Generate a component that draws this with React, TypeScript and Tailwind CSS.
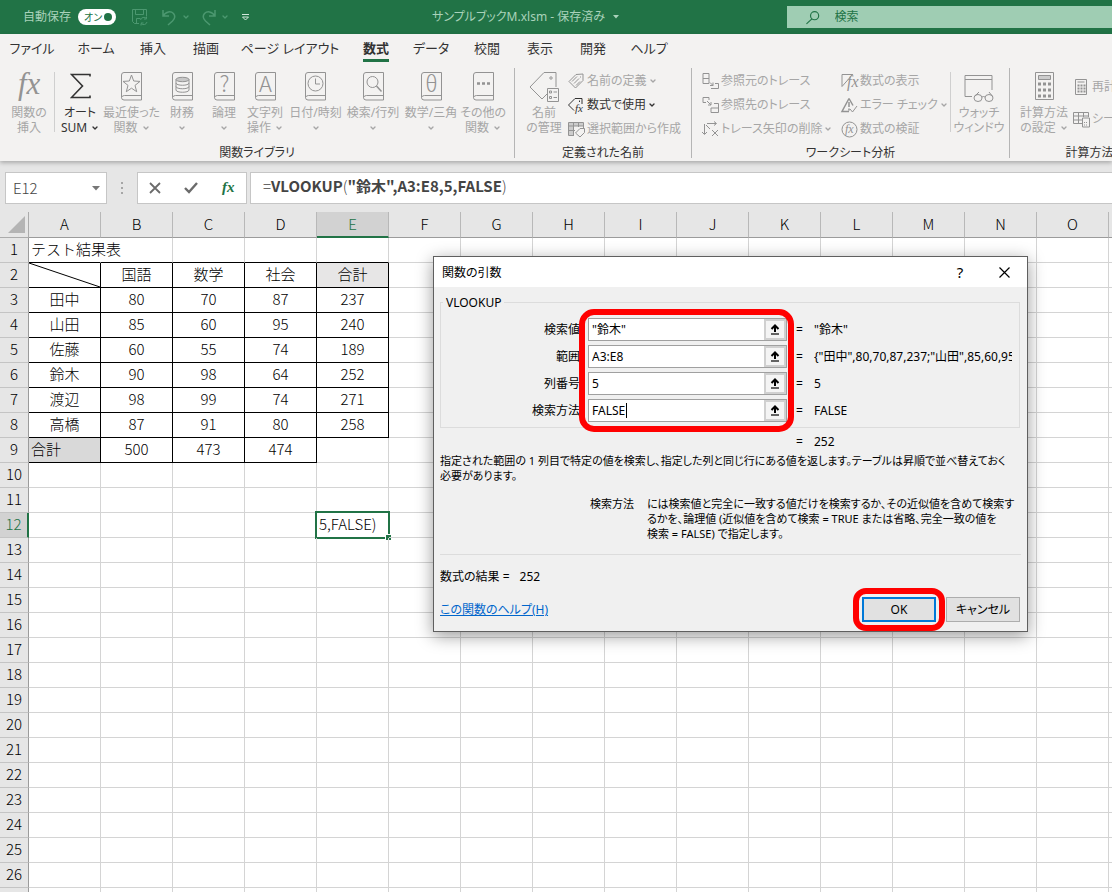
import React from 'react';
import { ChevronDown } from 'lucide-react';

interface Command {
  label: string[];
  icon: React.ReactNode;
  width: string;
  menu?: boolean;
  enabled?: boolean;
}

interface Argument {
  id: string;
  label: string;
  value: string;
  result: string;
  focused?: boolean;
}

const COLUMNS = ['A', 'B', 'C', 'D', 'E', 'F', 'G', 'H', 'I', 'J', 'K', 'L', 'M', 'N', 'O', 'P'];
const ROW_COUNT = 27;

const CELLS: Record<number, string[]> = {
  1: ['テスト結果表'],
  2: ['', '国語', '数学', '社会', '合計'],
  3: ['田中', '80', '70', '87', '237'],
  4: ['山田', '85', '60', '95', '240'],
  5: ['佐藤', '60', '55', '74', '189'],
  6: ['鈴木', '90', '98', '64', '252'],
  7: ['渡辺', '98', '99', '74', '271'],
  8: ['高橋', '87', '91', '80', '258'],
  9: ['合計', '500', '473', '474'],
  12: ['', '', '', '', '5,FALSE)'],
};

const TABS = [
  { label: 'ファイル', width: 'w-16' },
  { label: 'ホーム', width: 'w-16' },
  { label: '挿入', width: 'w-[50px]' },
  { label: '描画', width: 'w-14' },
  { label: 'ページ レイアウト', width: 'w-[112px]' },
  { label: '数式', width: 'w-[60px]' },
  { label: 'データ', width: 'w-[50px]' },
  { label: '校閲', width: 'w-[62px]' },
  { label: '表示', width: 'w-11' },
  { label: '開発', width: 'w-[62px]' },
  { label: 'ヘルプ', width: 'w-[50px]' },
];

const ARGUMENTS: Argument[] = [
  { id: 'lookup-value', label: '検索値', value: '"鈴木"', result: '"鈴木"' },
  { id: 'table-array', label: '範囲', value: 'A3:E8', result: '{"田中",80,70,87,237;"山田",85,60,95,240' },
  { id: 'col-index', label: '列番号', value: '5', result: '5' },
  { id: 'range-lookup', label: '検索方法', value: 'FALSE', result: 'FALSE', focused: true },
];

const Chevron = () => <ChevronDown className="w-2 h-2 shrink-0" strokeWidth={4} />;

const Book: React.FC<{ children: React.ReactNode }> = ({ children }) => (
  <svg width="21" height="29" viewBox="0 0 21 29" fill="none" stroke="currentColor" className="overflow-visible">
    <path d="M20.500 .5H3a2.500 2.500 0 0 0-2.500 2.500v22.500a2.500 2.500 0 0 0 2.500 2.500h17.500zM.5 25.500q.5-2 3-2h17" />
    {children}
  </svg>
);

const letter = (char: string) => (
  <text
    x="10.500"
    y="20"
    textAnchor="middle"
    fontSize="22"
    fontFamily="Noto Sans CJK JP, sans-serif"
    fontWeight="300"
    fill="currentColor"
    stroke="none"
  >
    {char}
  </text>
);

const fxText = (x: number, y: number, size: number) => (
  <text
    x={x}
    y={y}
    fontSize={size}
    fontFamily="Liberation Serif, serif"
    fontStyle="italic"
    fill="currentColor"
    stroke="none"
  >
    fx
  </text>
);

const LIBRARY: Command[] = [
  {
    label: ['オート', 'SUM'],
    width: 'w-[50px]',
    menu: true,
    enabled: true,
    icon: (
      <svg width="21" height="29" viewBox="0 0 21 29" fill="none" stroke="currentColor" strokeWidth="1.600">
        <path d="M20 4.500V2.500H1.500L12.500 14L1.500 25.500H20V23.500" />
      </svg>
    ),
  },
  {
    label: ['最近使った', '関数'],
    width: 'w-[53px]',
    menu: true,
    icon: (
      <Book>
        <path d="M10.500 3l2.200 6 6.300.4-5 4 1.700 6.300-5.200-3.500-5.200 3.500L7 13.400l-5-4 6.300-.4z" />
      </Book>
    ),
  },
  {
    label: ['財務'],
    width: 'w-12',
    menu: true,
    icon: (
      <Book>
        <ellipse cx="10.500" cy="7.500" rx="6.500" ry="2.200" fill="#c8c8c8" />
        <path d="M4 7.500v10.500c0 3 13 3 13 0V7.500M4 11c0 3 13 3 13 0M4 14.500c0 3 13 3 13 0" />
      </Book>
    ),
  },
  { label: ['論理'], width: 'w-9', menu: true, icon: <Book>{letter('?')}</Book> },
  { label: ['文字列', '操作'], width: 'w-[46px]', menu: true, icon: <Book>{letter('A')}</Book> },
  {
    label: ['日付/時刻'],
    width: 'w-[55px]',
    menu: true,
    icon: (
      <Book>
        <circle cx="10.500" cy="11.500" r="7.500" />
        <path d="M10.500 6.500v5.500h4.500" />
      </Book>
    ),
  },
  {
    label: ['検索/行列'],
    width: 'w-[60px]',
    menu: true,
    icon: (
      <Book>
        <circle cx="9.500" cy="10" r="5.500" />
        <path d="M13.500 14l5 5.500" strokeWidth="1.500" />
      </Book>
    ),
  },
  { label: ['数学/三角'], width: 'w-14', menu: true, icon: <Book>{letter('θ')}</Book> },
  {
    label: ['その他の', '関数'],
    width: 'w-12',
    menu: true,
    icon: (
      <Book>
        <path d="M4 11.500h13" strokeWidth="2.500" strokeDasharray="3 2" />
      </Book>
    ),
  },
];

const LargeButton: React.FC<Command> = ({ label, icon, width, menu, enabled }) => (
  <button
    className={`${width} flex flex-col items-center shrink-0 whitespace-nowrap text-[12px] leading-[15px] ${
      enabled ? 'text-[#333333]' : 'text-[#a6a6a6]'
    }`}
  >
    <span className={`h-[33px] flex items-start justify-center ${enabled ? '' : 'text-[#939393]'}`}>{icon}</span>
    <span>{label[0]}</span>
    <span className="h-[15px] flex items-center gap-1">
      {label[1]}
      {menu && <Chevron />}
    </span>
  </button>
);

const SmallButton: React.FC<{
  icon: React.ReactNode;
  label: string;
  menu?: boolean;
  enabled?: boolean;
}> = ({ icon, label, menu, enabled }) => (
  <button
    className={`h-6 flex items-center gap-[2px] whitespace-nowrap text-[12px] ${
      enabled ? 'text-[#333333]' : 'text-[#a6a6a6]'
    }`}
  >
    <svg
      width="17"
      height="17"
      viewBox="0 0 17 17"
      fill="none"
      stroke="currentColor"
      className={`shrink-0 overflow-visible ${enabled ? '' : 'text-[#939393]'}`}
    >
      {icon}
    </svg>
    <span>{label}</span>
    {menu && <Chevron />}
  </button>
);

const Group: React.FC<{ title: string; width: string; children: React.ReactNode }> = ({ title, width, children }) => (
  <div className={`${width} shrink-0 h-[90px] flex flex-col border-r border-[#b5b5b5]`}>
    <div className="h-[77px] shrink-0 flex pt-1">{children}</div>
    <div className="shrink-0 text-center text-[12px] leading-4 text-[#333333]">{title}</div>
  </div>
);

const TitleBar = () => (
  <header className="h-[34px] shrink-0 grid grid-cols-[432px_355px_1fr] items-center bg-[#217346] text-[12px] text-[#a9d2ba]">
    <div className="flex items-center pl-[23px]">
      <span id="autosave">自動保存</span>
      <button
        role="switch"
        aria-checked="true"
        aria-labelledby="autosave"
        className="ml-[7px] w-[38px] h-4 flex items-center justify-between rounded-full bg-white pl-[6px] pr-1 text-[10px] text-[#217346]"
      >
        オン
        <span className="w-2 h-2 rounded-full bg-[#217346]" />
      </button>
      <div className="flex items-center pl-4 text-[#4c9870]">
        <button aria-label="保存">
          <svg width="17" height="17" viewBox="0 0 17 17" fill="none" stroke="currentColor">
            <path d="M7 14.500H2.500l-2-2V.5h14V7M3.500.5v5h8v-5M4.500 14.500V9.500h4M8.500 11a3.500 3.500 0 0 1 6-1.500V7.500m0 2.500h-2.500M15 13a3.500 3.500 0 0 1-6 1.500v2m0-2.500h2.500" />
          </svg>
        </button>
        <button aria-label="元に戻す" className="ml-3 flex items-center gap-1">
          <svg width="17" height="17" viewBox="0 0 17 17" fill="none" stroke="currentColor" strokeWidth="1.500">
            <path d="M2 1v6h6M2 7c3-5 8-5 10.500-2.500 2.500 3 1 5.500-1 7.500L7 16" />
          </svg>
          <Chevron />
        </button>
        <button aria-label="やり直し" className="ml-[10px] flex items-center gap-1">
          <svg width="17" height="17" viewBox="0 0 17 17" fill="none" stroke="currentColor" strokeWidth="1.500">
            <path d="M15 1v6H9M15 7c-3-5-8-5-10.500-2.500-2.500 3-1 5.500 1 7.500L10 16" />
          </svg>
          <Chevron />
        </button>
        <button aria-label="クイック アクセス ツール バーのユーザー設定" className="ml-3 text-[#d3e8dc]">
          <svg width="9" height="8" viewBox="0 0 9 8" fill="none" stroke="currentColor">
            <path d="M1 1.500h7M1.500 4h6l-3 3z" />
          </svg>
        </button>
      </div>
    </div>
    <button className="flex items-center gap-2 whitespace-nowrap text-[12px]">
      サンプルブックM.xlsm - 保存済み
      <svg width="6" height="4" viewBox="0 0 6 4" fill="currentColor">
        <path d="M0 0h6L3 3.500z" />
      </svg>
    </button>
    <label className="h-[22px] flex items-center bg-[#9fcdb3] pl-[19px] text-[#217346]">
      <svg width="15" height="15" viewBox="0 0 15 15" fill="none" stroke="currentColor" strokeWidth="1.300">
        <circle cx="9.500" cy="5.500" r="4.500" />
        <path d="M6.500 9L.5 14.500" />
      </svg>
      <input
        type="search"
        aria-label="検索"
        placeholder="検索"
        className="ml-[15px] w-full min-w-0 bg-transparent text-[12px] placeholder:text-[#217346] placeholder:opacity-100 outline-none"
      />
    </label>
  </header>
);

const Ribbon = () => (
  <div className="shrink-0 h-[127px] bg-[#f3f2f1] shadow-[0_2px_4px_rgba(0,0,0,0.25)] relative overflow-hidden">
    <nav className="flex h-[34px] text-[13px] text-[#333333]">
      {TABS.map(({ label, width }) => (
        <button key={label} className={`${width} shrink-0 flex justify-center whitespace-nowrap`}>
          <span
            className={`h-7 flex items-center pt-[5px] border-b-[3px] ${
              label === '数式' ? 'border-[#217346] font-bold' : 'border-transparent'
            }`}
          >
            {label}
          </span>
        </button>
      ))}
    </nav>
    <div className="flex">
      <Group title="関数ライブラリ" width="w-[515px]">
        <span className="w-1 shrink-0" />
        <LargeButton
          label={['関数の', '挿入']}
          width="w-[50px]"
          icon={
            <svg width="26" height="29" viewBox="0 0 26 29" className="overflow-visible">
              {fxText(2, 22, 31)}
            </svg>
          }
        />
        <span className="w-px h-[60px] bg-[#cfcfcf] shrink-0" />
        {LIBRARY.map((command) => (
          <LargeButton key={command.label.join('')} {...command} />
        ))}
      </Group>

      <Group title="定義された名前" width="w-[177px]">
        <span className="w-[9px] shrink-0" />
        <LargeButton
          label={['名前', 'の管理']}
          width="w-10"
          icon={
            <svg width="30" height="31" viewBox="0 0 30 31" fill="none" stroke="currentColor">
              <path d="M18.500 16.500h11v13h-11zM27 15V.5H15L1 15l12 12 5-5" />
              <circle cx="22" cy="6" r="1.200" />
              <path d="M20.500 19h2v2h-2zM20.500 24.500h2v2h-2zM24.500 20h3.500M24.500 25.500h3.500" />
            </svg>
          }
        />
        <div className="pl-1">
          <div className="h-[72px] -mt-[3px] flex flex-col">
            <SmallButton
              label="名前の定義"
              menu
              icon={<path d="M1 8.500L8 1.500l7-.5v6.500L7.500 15zM4 8.500l5-5M6 10.500l5-5M8 12.500l4-4M12.500 3.500v1" />}
            />
            <SmallButton
              label="数式で使用"
              menu
              enabled
              icon={
                <>
                  <path d="M6 13.500L.5 8 7 1.500h7V7M11.500 3.500v1.500" />
                  {fxText(7, 15, 11)}
                </>
              }
            />
            <SmallButton
              label="選択範囲から作成"
              icon={
                <>
                  <path d="M1 2h14v3H1zM1 5h4v9H1z" fill="#cccccc" stroke="none" />
                  <path d="M6 14.500H.5V1.500h15V7M.5 5h15M.5 9.500H7M5.500 1.500v13M10.500 1.500V6" />
                  <path d="M7.500 12L12 7.500h4.500v4L12 16z" />
                </>
              }
            />
          </div>
        </div>
      </Group>

      <Group title="ワークシート分析" width="w-[318px]">
        <div className="w-[149px] shrink-0 pl-[10px]">
          <div className="h-[72px] -mt-[3px] flex flex-col">
            <SmallButton
              label="参照元のトレース"
              icon={<path d="M1 .5h6v10H1zM1 5.500h6M8 9.500l3 3M11 9.500v3H8M9 15.500h7.500v-5H13" />}
            />
            <SmallButton
              label="参照先のトレース"
              icon={<path d="M4 5.500H1v-5h6V3M5 4l4 4M9 5v3H6M12 6.500h4.500v9h-7.500V11M9 11h7.500" />}
            />
            <SmallButton
              label="トレース矢印の削除"
              menu
              icon={<path d="M2.500 3v10M0 11l2.500 2.500L5 11M5 2.500h9M12 .5l2.500 2-2.500 2M4 4l4 4M10 9l6 6M16 9l-6 6" />}
            />
          </div>
        </div>
        <div className="w-[109px] shrink-0">
          <div className="h-[72px] -mt-[3px] flex flex-col">
            <SmallButton
              label="数式の表示"
              icon={
                <>
                  <path d="M11 1.500H1v12L12 1" />
                  {fxText(6, 14, 16)}
                </>
              }
            />
            <SmallButton
              label="エラー チェック"
              menu
              icon={
                <>
                  <path d="M8 1.500L1 14.500h7M8 1.500l4 7M8 5v5M8 11.500v2" strokeWidth="1.500" />
                  <path d="M9 12l2.500 3L16 9" />
                </>
              }
            />
            <SmallButton
              label="数式の検証"
              icon={
                <>
                  <circle cx="8.500" cy="8.500" r="7.500" />
                  {fxText(4, 12, 12)}
                </>
              }
            />
          </div>
        </div>
        <span className="w-px h-[60px] bg-[#cfcfcf] shrink-0" />
        <LargeButton
          label={['ウォッチ', 'ウィンドウ']}
          width="w-14"
          icon={
            <svg width="30" height="31" viewBox="0 0 30 31" fill="none" stroke="currentColor">
              <path d="M8 24.500H1V3.500h27V18M1 7.500h27" />
              <ellipse cx="14" cy="26" rx="4" ry="3.500" />
              <ellipse cx="25" cy="26" rx="4" ry="3.500" />
              <path d="M18 25q1.500-1 3 0M10 25l5-5M29 25l-4-5" />
            </svg>
          }
        />
      </Group>

      <Group title="計算方法" width="w-[160px]">
        <span className="w-[9px] shrink-0" />
        <LargeButton
          label={['計算方法', 'の設定']}
          width="w-[50px]"
          menu
          icon={
            <svg width="19" height="29" viewBox="0 0 19 29" fill="none" stroke="currentColor">
              <path d="M.5.500h18v27H.5z" />
              <path d="M3.500 3.500h12v4h-12z" fill="#cccccc" />
              <path d="M3 12h13M3 18h13M3 24h13" strokeWidth="3" strokeDasharray="3 2" />
            </svg>
          }
        />
        <div className="pl-1 pt-[3px] flex flex-col gap-2">
          <SmallButton
            label="再計算実行"
            icon={
              <>
                <path d="M2.500.5h11v15h-11zM4.500 3h7" />
                <path d="M4.500 6.500h8M4.500 9.500h8M4.500 12.500h8" strokeWidth="2" strokeDasharray="2 1" />
              </>
            }
          />
          <SmallButton
            label="シート再計算"
            icon={
              <>
                <path d="M9 12.500H.5v-11h15V6M.5 5h15M.5 9H9M5.500 1.500v11M10.500 1.500V6M9.500 7h7v9h-7z" />
                <path d="M11 11.500h4M11 14h4" strokeDasharray="1 1" />
              </>
            }
          />
        </div>
      </Group>
    </div>
  </div>
);

const FormulaBar = () => (
  <div className="shrink-0 flex h-[51px] pt-[11px] pb-2 pl-[5px] text-[#444444]">
    <div className="w-[102px] h-8 flex items-center border border-[#c6c6c6] bg-white">
      <input
        aria-label="名前ボックス"
        defaultValue="E12"
        className="w-[86px] pl-[7px] bg-transparent text-[15px] font-light outline-none"
      />
      <svg width="8" height="5" viewBox="0 0 8 5" fill="#777777">
        <path d="M0 0h8L4 4.500z" />
      </svg>
    </div>
    <div className="w-[30px] flex flex-col items-center justify-center gap-[3px]">
      <span className="w-[2px] h-[2px] bg-[#a6a6a6]" />
      <span className="w-[2px] h-[2px] bg-[#a6a6a6]" />
      <span className="w-[2px] h-[2px] bg-[#a6a6a6]" />
    </div>
    <div className="w-[110px] h-8 flex items-center justify-around border border-[#c6c6c6] bg-white text-[#6b6b6b]">
      <button aria-label="キャンセル">
        <svg width="12" height="12" viewBox="0 0 12 12" fill="none" stroke="currentColor" strokeWidth="1.800">
          <path d="M1 1l10 10M11 1L1 11" />
        </svg>
      </button>
      <button aria-label="入力">
        <svg width="14" height="12" viewBox="0 0 14 12" fill="none" stroke="currentColor" strokeWidth="2.400">
          <path d="M1 6l4 4 8-9" />
        </svg>
      </button>
      <button aria-label="関数の挿入" className="text-[#217346]">
        <svg width="14" height="16" viewBox="0 0 14 16" className="overflow-visible">
          <g fontWeight="bold">{fxText(1, 12, 15)}</g>
        </svg>
      </button>
    </div>
    <div
      role="textbox"
      aria-label="数式バー"
      tabIndex={0}
      className="ml-[3px] flex-1 h-8 flex items-center whitespace-nowrap border border-r-0 border-[#c6c6c6] bg-white pl-3 pb-[3px] text-[15px] font-light"
    >
      =<span className="font-bold">VLOOKUP</span>(<span className="font-bold">"鈴木",A3:E8,5,FALSE</span>)
    </div>
  </div>
);

function isTableCell(row: number, col: number) {
  if (row >= 2 && row <= 8) return col >= 0 && col < 5;
  return row === 9 && col >= 0 && col < 4;
}

function cellClass(row: number, col: number) {
  const classes = ['relative h-[25px] p-0 align-top border-r border-b whitespace-nowrap'];
  const inTable = isTableCell(row, col);
  classes.push(inTable || isTableCell(row + 1, col) ? 'border-b-black' : 'border-b-[#d4d4d4]');
  if (row === 1 && col === 0) classes.push('border-r-transparent');
  else classes.push(inTable ? 'border-r-black' : 'border-r-[#d4d4d4]');
  if ((col === 0 && (row === 1 || row === 9)) || row === 12) classes.push('pl-[2px] text-left');
  else classes.push('text-center');
  if (row === 2 && col === 4) classes.push('bg-[#e7e6e6]');
  if (row === 9 && col === 0) classes.push('bg-[#d9d9d9]');
  return classes.join(' ');
}

const Sheet = () => (
  <table className="w-[1181px] table-fixed border-separate border-spacing-0 bg-white text-[15px] leading-[22px] font-light text-black">
    <thead>
      <tr>
        <th className="w-[29px] h-[26px] p-0 border-r border-b border-[#ababab] bg-[#e6e6e6]">
          <svg width="17" height="17" viewBox="0 0 17 17" className="ml-2" fill="#b4b4b4">
            <path d="M17 0v17H0z" />
          </svg>
        </th>
        {COLUMNS.map((name) => (
          <th
            key={name}
            scope="col"
            className={`w-[72px] h-[26px] p-0 align-top border-r border-r-[#b8b8b8] font-light leading-6 ${
              name === 'E'
                ? 'border-b-2 border-b-[#217346] bg-[#d2d2d2] text-[#217346]'
                : 'border-b border-b-[#9b9b9b] bg-[#e6e6e6]'
            }`}
          >
            {name}
          </th>
        ))}
      </tr>
    </thead>
    <tbody>
      {Array.from({ length: ROW_COUNT }, (_, i) => i + 1).map((row) => (
        <tr key={row}>
          <th
            scope="row"
            className={`h-[25px] p-0 align-top border-b border-b-[#c4c4c4] font-light ${
              row === 12
                ? 'border-r-2 border-r-[#217346] bg-[#d2d2d2] text-[#217346]'
                : 'border-r border-r-[#9b9b9b] bg-[#e6e6e6]'
            }`}
          >
            {row}
          </th>
          {COLUMNS.map((name, col) => (
            <td key={name} className={cellClass(row, col)}>
              {CELLS[row]?.[col]}
              {row === 2 && col === 0 && (
                <svg className="block" width="71" height="24" viewBox="0 0 71 24" stroke="black">
                  <path d="M0 0l71 24" />
                </svg>
              )}
              {row === 12 && name === 'E' && (
                <span className="absolute -inset-[2px] border-2 border-[#217346] pointer-events-none">
                  <span className="absolute -right-[3px] -bottom-[3px] w-[6px] h-[6px] bg-white pl-px pt-px">
                    <span className="block w-[5px] h-[5px] bg-[#217346]" />
                  </span>
                </span>
              )}
            </td>
          ))}
        </tr>
      ))}
    </tbody>
  </table>
);

const ArgumentRow: React.FC<Argument> = ({ id, label, value, result, focused }) => (
  <div className="h-[27px] flex items-center">
    <label htmlFor={id} className="w-[139px] shrink-0 text-right">
      {label}
    </label>
    <span className="ml-2 w-[199px] h-[23px] shrink-0 flex border border-[#a0a0a0] bg-white">
      <span className="flex-1 min-w-0 flex items-center pb-px">
        <input
          id={id}
          defaultValue={value}
          size={4}
          className={`pl-[3px] bg-transparent outline-none ${focused ? 'w-[38px] border-r border-black' : 'w-full'}`}
        />
      </span>
      <button
        aria-label={`${label}の範囲を選択`}
        className="w-[22px] shrink-0 flex items-center justify-center border-2 border-[#d0d0d0] bg-[#f4f4f4] text-black"
      >
        <svg width="10" height="11" viewBox="0 0 10 11" fill="none" stroke="currentColor" strokeWidth="2">
          <path d="M5 8V2M1.500 5L5 1.500 8.500 5" />
          <path d="M1 10h8" strokeWidth="1.200" />
        </svg>
      </button>
    </span>
    <span className="ml-[9px] w-[18px] shrink-0">=</span>
    <output htmlFor={id} className="w-[198px] overflow-hidden whitespace-nowrap">
      {result}
    </output>
  </div>
);

const FunctionDialog = () => (
  <div
    role="dialog"
    aria-labelledby="dialog-title"
    className="absolute left-[433px] top-[256px] w-[595px] h-[376px] flex flex-col border border-[#5f5f5f] bg-[#f0f0f0] text-[12px] leading-[15px] text-black shadow-[0_4px_16px_rgba(0,0,0,0.4)]"
  >
    <div className="h-[30px] shrink-0 flex items-center bg-white pl-2 pr-[17px]">
      <h2 id="dialog-title" className="flex-1">
        関数の引数
      </h2>
      <button aria-label="ヘルプ" className="w-3 text-[15px]">
        ?
      </button>
      <button aria-label="閉じる" className="ml-[33px]">
        <svg width="11" height="11" viewBox="0 0 11 11" fill="none" stroke="currentColor" strokeWidth="1.200">
          <path d="M.5.500l10 10M10.500.5l-10 10" />
        </svg>
      </button>
    </div>

    <div className="flex-1 flex flex-col px-[6px]">
      <fieldset className="relative mt-2 h-[133px] w-[580px] border border-[#dcdcdc] px-0">
        <legend className="ml-[2px] px-[3px]">VLOOKUP</legend>
        <div className="pt-[6px]">
          {ARGUMENTS.map((argument) => (
            <ArgumentRow key={argument.id} {...argument} />
          ))}
        </div>
        <span className="absolute left-[138px] -top-[1px] w-[215px] h-[123px] rounded-[15px] border-[6px] border-[#ff0000] pointer-events-none" />
      </fieldset>

      <div className="mt-[6px] flex pl-[356px]">
        <span className="w-[18px]">=</span>
        <span>252</span>
      </div>
      <p className="mt-1 whitespace-nowrap text-[11px]">
        指定された範囲の 1 列目で特定の値を検索し、指定した列と同じ行にある値を返します。テーブルは昇順で並べ替えておく
        <br />
        必要があります。
      </p>
      <dl className="mt-[13px] flex pl-[150px] whitespace-nowrap text-[11px]">
        <dt className="w-[57px] shrink-0">検索方法</dt>
        <dd>
          には検索値と完全に一致する値だけを検索するか、その近似値を含めて検索す
          <br />
          るかを、論理値 (近似値を含めて検索 = TRUE または省略、完全一致の値を
          <br />
          検索 = FALSE) で指定します。
        </dd>
      </dl>
      <hr className="mt-[13px] border-[#dcdcdc]" />
      <div className="mt-[14px] flex gap-[10px]">
        <span>数式の結果 =</span>
        <span>252</span>
      </div>
      <div className="mt-[13px] flex items-center">
        <a href="#help" className="flex-1 text-[#0066cc] underline">
          この関数のヘルプ(H)
        </a>
        <span className="relative">
          <button className="block w-[74px] h-[25px] border-2 border-[#0078d7] bg-[#e1e1e1]">OK</button>
          <span className="absolute -inset-[9px] rounded-[13px] border-[6px] border-[#ff0000] pointer-events-none" />
        </span>
        <button className="ml-[10px] mr-[1px] w-[74px] h-[25px] border border-[#adadad] bg-[#e1e1e1]">
          キャンセル
        </button>
      </div>
    </div>
  </div>
);

const App: React.FC = () => (
  <div className="relative h-screen flex flex-col overflow-hidden bg-[#e6e6e6] font-['Noto_Sans','Noto_Sans_CJK_JP',sans-serif] [font-feature-settings:'palt']">
    <TitleBar />
    <Ribbon />
    <div className="flex-1 min-h-0 flex flex-col font-['Noto_Sans_CJK_JP',sans-serif] [font-feature-settings:normal]">
      <FormulaBar />
      <main className="flex-1 min-h-0 overflow-hidden">
        <Sheet />
      </main>
    </div>
    <FunctionDialog />
  </div>
);

export default App;
